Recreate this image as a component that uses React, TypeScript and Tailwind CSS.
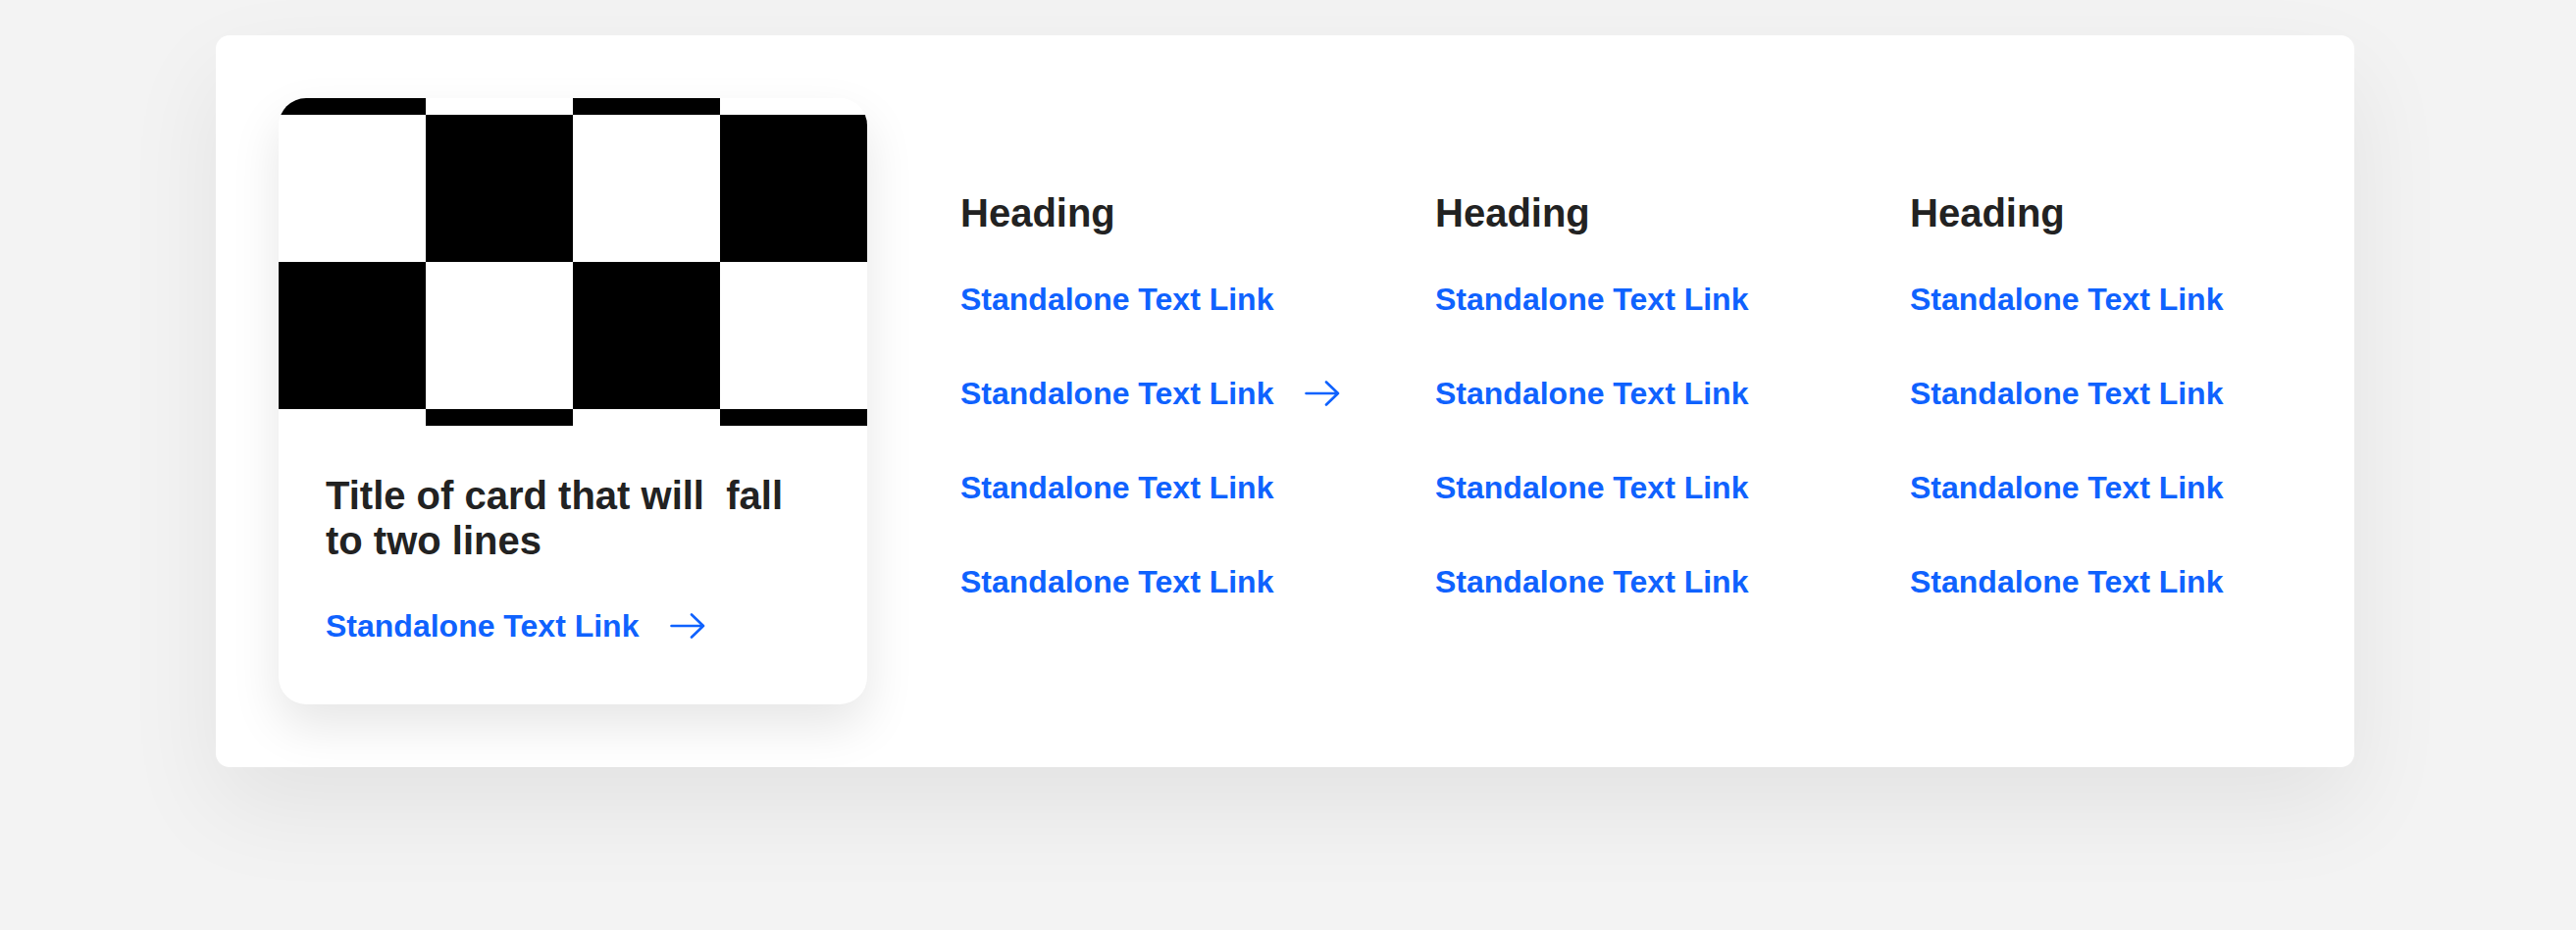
import React from 'react';

const LINK = 'Standalone Text Link';

const ArrowRight: React.FC = () => (
  <svg width="36" height="26" viewBox="0 0 36 26" fill="none" className="shrink-0">
    <path d="M1.5 13H34M22 1.5L34 13L22 24.5" stroke="#0f62fe" strokeWidth="2.6" strokeLinecap="round" strokeLinejoin="round" />
  </svg>
);

const Checkerboard: React.FC = () => {
  // 4 columns of 150px, two full rows plus a 17px slice of the rows above and below
  const rows = [
    { y: 0, h: 17, black: [0, 2] },
    { y: 17, h: 150, black: [1, 3] },
    { y: 167, h: 150, black: [0, 2] },
    { y: 317, h: 17, black: [1, 3] },
  ];
  return (
    <svg width="600" height="334" viewBox="0 0 600 334" className="block">
      <rect width="600" height="334" fill="#ffffff" />
      {rows.map((r) =>
        r.black.map((c) => <rect key={`${r.y}-${c}`} x={c * 150} y={r.y} width="150" height={r.h} fill="#000000" />)
      )}
    </svg>
  );
};

const TextLink: React.FC<{ arrow?: boolean }> = ({ arrow }) => (
  <a href="#" className="flex items-center gap-8 text-[32px] leading-[36px] font-bold text-[#0f62fe] whitespace-nowrap">
    <span>{LINK}</span>
    {arrow && <ArrowRight />}
  </a>
);

const LinkColumn: React.FC<{ arrowAt?: number; className?: string }> = ({ arrowAt, className = '' }) => (
  <div className={`flex flex-col pt-[94px] ${className}`}>
    <h3 className="text-[40px] leading-[46px] font-bold text-[#222222]">Heading</h3>
    <div className="flex flex-col gap-[60px] mt-[47px]">
      {[0, 1, 2, 3].map((i) => (
        <TextLink key={i} arrow={i === arrowAt} />
      ))}
    </div>
  </div>
);

export default function App() {
  return (
    <div
      className="min-h-screen w-full bg-[#f3f3f3] pt-[36px] pl-[220px]"
      style={{ fontFamily: '"Liberation Sans", Arial, sans-serif' }}
    >
      <div className="w-[2180px] bg-white rounded-[14px] p-16 flex shadow-[0_40px_100px_rgba(0,0,0,0.07)]">
        {/* Card */}
        <div className="w-[600px] shrink-0 bg-white rounded-[28px] overflow-hidden shadow-[0_22px_50px_rgba(0,0,0,0.1)]">
          <Checkerboard />
          <div className="px-12 pt-12 pb-[62px]">
            <h2 className="text-[40px] leading-[46px] font-bold text-[#222222] whitespace-pre-wrap">
              {'Title of card that will  fall to two lines'}
            </h2>
            <div className="mt-[46px]">
              <TextLink arrow />
            </div>
          </div>
        </div>

        {/* Link columns */}
        <div className="flex ml-[95px] flex-1">
          <LinkColumn arrowAt={1} className="w-[484px] shrink-0" />
          <LinkColumn className="w-[484px] shrink-0" />
          <LinkColumn className="flex-1" />
        </div>
      </div>
    </div>
  );
}
